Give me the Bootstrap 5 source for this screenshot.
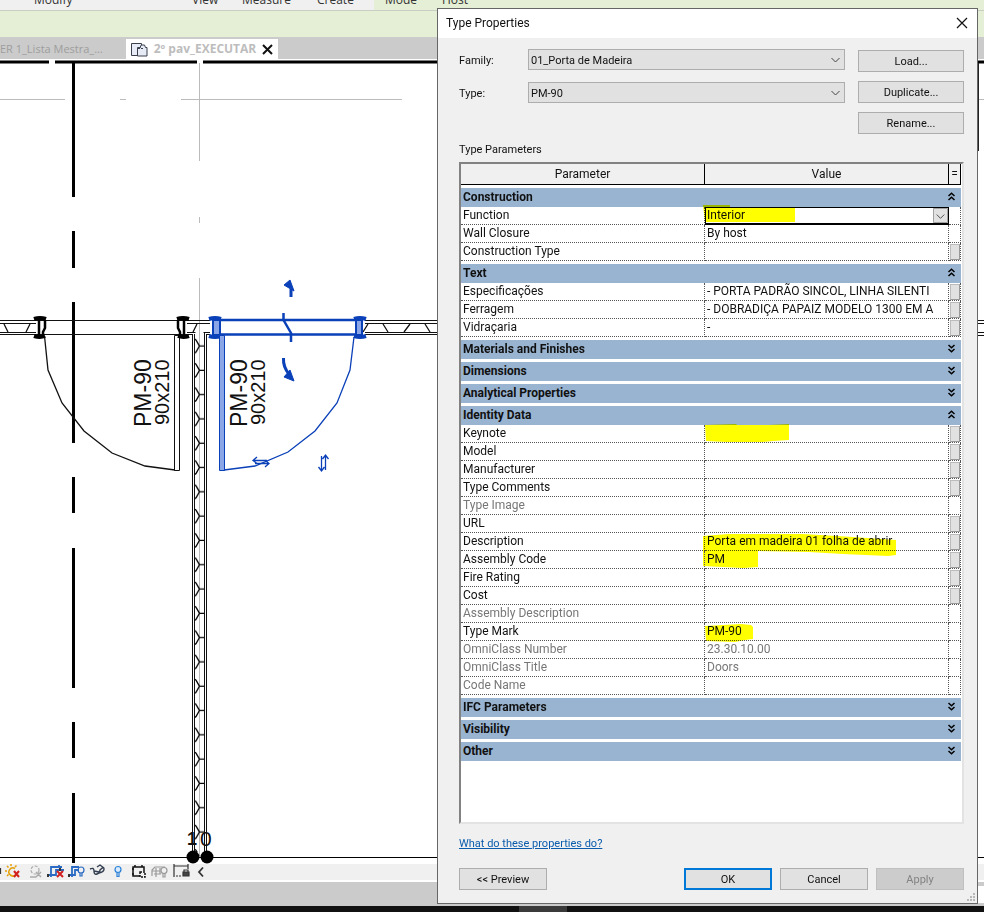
<!DOCTYPE html>
<html lang="en">
<head>
<meta charset="utf-8">
<meta name="viewport" content="width=device-width, initial-scale=1">
<title>Type Properties</title>
<link href="https://cdn.jsdelivr.net/npm/bootstrap@5.3.0/dist/css/bootstrap.min.css" rel="stylesheet">
<style>
  body { font-family: "Open Sans", "Noto Sans", sans-serif; font-size: 12px; line-height: 16px; color: #111; background: #fff; }
  .workspace { min-height: 912px; }
  /* application frame */
  .ribbon-titles { height: 11px; background: linear-gradient(90deg, #f0f0f0 38%, #e4efd6 38%); border-bottom: 1px solid #c9cdc4; display: grid; grid-template: 10px / 158px 50px 75px 68px 57px auto; padding-left: 34px; align-items: end; color: #333; }
  .ribbon-titles span { line-height: 16px; margin-bottom: 2px; }
  .ribbon-panel { height: 26px; background: #e4efd6; }
  .view-tabs { height: 22px; background: #cbcbcb; color: #9d9d9d; }
  .view-tab { width: 126px; font-size: 11px; line-height: 20px; }
  .view-tab-active { width: 152px; height: 20px; background: #fff; color: #bdbdbd; padding: 0 5px; }
  .plan { flex: 1 1 799px; min-height: 0; background: #fff; overflow: visible; }
  .view-controls { height: 24px; background: #f0f0f0; border-top: 6px solid #fff; border-bottom: 2px solid #fff; }
  .view-controls svg { overflow: visible; }
  .frame-strip { height: 24px; background: #cbcbcb; }
  .frame-strip span { width: 7px; height: 17px; background: #fff; }
  .taskbar { height: 6px; background: #111; padding-left: 519px; }
  .taskbar span { width: 48px; background: #3a3a3a; }
  /* dialog window */
  .dialog { top: 8px; left: 437px; right: 6px; background: #f0f0f0; border: 1px solid #666; font-family: Roboto, "Open Sans", sans-serif; }
  .dialog-title { height: 29px; background: #fff; padding: 0 9px 2px 8px; }
  .dialog-title button { width: 12px; height: 12px; }
  .dialog-body { padding: 11px 13px 13px 21px; font-size: 11px; }
  .family-grid { display: grid; grid-template-columns: 69px 1fr; row-gap: 12px; }
  .family-grid label { line-height: 19px; align-self: end; }
  .family-grid .form-select { height: 21px; min-height: 0; padding: 2px 24px 0 2px; font-size: 11px; line-height: 17px; color: #111; background-color: #e1e1e1; border: 1px solid #adadad; border-radius: 0; background-position: right 4px center; background-size: 9px 6px; --bs-form-select-bg-img: url("data:image/svg+xml,%3csvg xmlns='http://www.w3.org/2000/svg' viewBox='0 0 9 6'%3e%3cpath fill='none' stroke='%23444' d='M.5 1l4 4 4-4'/%3e%3c/svg%3e"); background-image: var(--bs-form-select-bg-img); }
  .family-row { gap: 13px; }
  .win-actions { width: 106px; gap: 9px; padding-top: 1px; }
  .win-btn { height: 22px; min-width: 88px; padding: 2px 0 0; font-size: 11px; line-height: 16px; color: #111; background: #e1e1e1; border: 1px solid #adadad; border-radius: 0; }
  .win-btn-default { border: 2px solid #0078d7; }
  .win-btn:disabled { background: #ccc; border-color: #bfbfbf; color: #838383; opacity: 1; }
  .params-box { background: #fff; border: 2px solid #e3e3e3; border-top-color: #828282; border-left-color: #828282; padding: 0 1px 61px 0; }
  .params { width: 100%; table-layout: fixed; border-collapse: separate; border-spacing: 0; font-size: 12px; line-height: 15px; }
  .params col:last-child { width: 12px; }
  .params thead th { height: 21px; padding: 0; font-weight: 400; text-align: center; background: #f0f0f0; border-bottom: 1px solid #000; border-right: 1px solid #000; }
  .params tbody td, .params tbody th { height: 18px; padding: 0 0 0 2px; font-weight: 400; text-align: left; vertical-align: middle; white-space: nowrap; border-bottom: 1px dotted #555; border-right: 1px dotted #555; position: relative; }
  .params tbody td:last-child { padding: 0; }
  .params tbody .section-title { height: 22px; padding: 0 5px 0 2px; font-weight: 700; background: #99b4d1; border: 0; border-top: 3px solid #fff; }
  .section-title button { width: 9px; height: 9px; margin-bottom: 2px; }
  .params .dim > th, .params .dim > td { color: #777; }
  .browse { display: block; width: 10px; height: 16px; margin-left: 1px; padding: 0; background: #e1e1e1; border: 1px solid #bbb; border-right-color: #999; border-bottom-color: #999; }
  .params tbody .edit-cell { padding: 0; border-bottom: 0; border-right: 0; }
  .function-select { display: block; width: 100%; height: 18px; padding: 0 18px 1px 1px; font-size: 12px; line-height: 14px; border: 1px solid #000; border-bottom-width: 2px; border-radius: 0; appearance: none; color: #111; background: #fff url("data:image/svg+xml,%3csvg xmlns='http://www.w3.org/2000/svg' viewBox='0 0 16 16'%3e%3cpath fill='%23e1e1e1' stroke='%23999' d='M.5.5h15v15H.5z'/%3e%3cpath fill='none' stroke='%23444' d='M4 7l4 4 4-4'/%3e%3c/svg%3e") right center / 15px 15px no-repeat; }
  /* marker-pen strokes over the values */
  .marker { position: absolute; left: -2px; top: -3px; mix-blend-mode: multiply; pointer-events: none; overflow: visible; fill: #ff0; }
  .help-line { margin-top: 12px; }
  .help-link { color: #0b5cad; }
  .footer-actions { margin-top: 16px; }
  .grip { position: absolute; right: 1px; bottom: 1px; fill: #b8b8b8; }
</style>
<script src="https://cdn.jsdelivr.net/npm/bootstrap@5.3.0/dist/js/bootstrap.bundle.min.js"></script>
</head>
<body>
<svg class="d-none">
  <symbol id="fold" viewBox="0 0 9 9"><path d="M1.500 4L4.500 1.200L7.500 4M1.500 8L4.500 5.200L7.500 8" fill="none" stroke="#000" stroke-width="1.500"/></symbol>
  <symbol id="unfold" viewBox="0 0 9 9"><path d="M1.500 1L4.500 3.800L7.500 1M1.500 5L4.500 7.800L7.500 5" fill="none" stroke="#000" stroke-width="1.500"/></symbol>
</svg>
<div class="workspace position-relative d-flex flex-column overflow-hidden">
  <div class="ribbon-titles"><span>Modify</span><span>View</span><span>Measure</span><span>Create</span><span>Mode</span><span>Host</span></div>
  <div class="ribbon-panel"></div>
  <div class="view-tabs d-flex align-items-end">
    <div class="view-tab text-nowrap">ER 1_Lista Mestra_...</div>
    <div class="view-tab-active d-flex align-items-center justify-content-between fw-bold text-nowrap">
      <svg width="17" height="15" viewBox="0 0 17 15" fill="#e6ebf5" stroke="#3a3f4c"><path d="M.5 1.500h10v12H.5z"/><path d="M6.500 5.500h3v-1.500l1-1h3l1 2.500h1.500v8.500h-9.500z"/><path d="M6.500 6v7.500M7 6.500h6" stroke-dasharray="2 1"/></svg>
      <span>2º pav_EXECUTAR</span>
      <button class="btn p-0 border-0 d-flex" aria-label="Close view"><svg width="11" height="11" viewBox="0 0 11 11"><path d="M1 1l9 9M10 1l-9 9" stroke="#111" stroke-width="2"/></svg></button>
    </div>
  </div>
  <svg class="plan d-block w-100 position-relative z-1" viewBox="0 59 984 799" preserveAspectRatio="xMinYMin slice" font-family="Liberation Sans, Arial, sans-serif">
    <defs>
      <g id="jamb"><path d="M34 319q6-2 12 0M34 336q6 2 11 0" fill="none" stroke-width="4"/><path d="M39 319v17M45 320v8l-2 4v4" fill="none" stroke-width="2.500"/></g>
      <pattern id="batt" x="192" y="334" width="15" height="24.300" patternUnits="userSpaceOnUse"><path d="M3 5L4 6L7.500 12L4 18L3 19M8 12h4" fill="none" stroke="#000" stroke-width="1.300"/></pattern>
    </defs>
    <path d="M0 62h49M55 62h142M203 62h234M978 62h6" stroke="#000" stroke-width="3"/>
    <path d="M0 99.500h65M120 99.500h6M181 99.500h221M978 99.500h6M199.500 63v98M199.500 217v6M199.500 278v578" stroke="#bbb"/>
    <path d="M978 63v88" stroke="#222" stroke-width="2"/>
    <path d="M73.500 63V197M73.500 231V268M73.500 302V443M73.500 477V513M73.500 548V688M73.500 722V758M73.500 793V863" stroke="#000" stroke-width="3"/>
    <g fill="none" stroke="#111">
      <path d="M0 320.500H210M0 323.500H36M187 323.500H210M0 332.500H36M187 332.500H195.500M203.500 332.500H210M0 334.500H192.500M206.500 334.500H210M365 320.500H437M365 323.500H437M365 332.500H437M365 334.500H437M978 320.500h6M978 323.500h6M978 332.500h6M978 335.500h6"/>
      <path d="M4 324l4 8M26 332l4-8M193 332l4-8M363 332l5-8M383 324l5 8M404 332l6-8M425 324l5 8" stroke-width="1.300"/>
      <path d="M192.500 334V857M194.500 334V857M204.500 332V857M206.500 334V857"/>
      <path d="M44.500 336L48 370L62 403L84 431L112 453L145 466L175 470" stroke-width="1.300"/>
      <path d="M174.500 335.500H179.500V470.500H174.500Z"/>
    </g>
    <path d="M192 334h15v518h-15z" fill="url(#batt)"/>
    <use href="#jamb" stroke="#000"/>
    <use href="#jamb" stroke="#000" transform="translate(223 0) scale(-1 1)"/>
    <g stroke="#0a40b8" fill="none">
      <path d="M220 320H355M220 334.500H355" stroke-width="2.500"/>
      <path d="M213 320h7v15h-7zM356 320h6v15h-6z" fill="#8ba6e6" stroke-width="2"/>
      <path d="M209 319q6-2 12 0M209 336q6 2 12 0M354 319q6-2 12 0M354 336q6 2 12 0" stroke-width="4"/>
      <path d="M219.500 335.500H224.500V470.500H219.500Z" fill="#8ba6e6"/>
      <path d="M224 470L255 466L288 452L315 431L337 403L350 370L354 337" stroke-width="1.300"/>
      <path d="M283.500 313V320L291 333V342" stroke-width="2.500"/>
      <path d="M291 297V289M283.500 358Q283 367 289 374" stroke-width="3"/>
      <path d="M284 285L290 280L294 291ZM284 377L290 370L294 381Z" fill="#0a40b8" stroke-width="1"/>
      <path d="M253 460.500H267M257 457l-4 3.500l4 3M255 463.500H269M265 460l4 3.500l-4 3.500M321.500 456V470M318.500 467l3 4l3-4M325.500 470V456M322.500 459l3-4l3 4" stroke-width="1.300"/>
    </g>
    <g fill="#111">
      <text transform="translate(151 427) rotate(-90)" font-size="23">PM-90</text>
      <text transform="translate(169 425) rotate(-90)" font-size="20">90x210</text>
      <text transform="translate(247 427) rotate(-90)" font-size="23">PM-90</text>
      <text transform="translate(265 425) rotate(-90)" font-size="20">90x210</text>
      <text x="187" y="845" font-size="18" font-weight="700">1</text>
      <text x="200" y="846" font-size="21">0</text>
    </g>
    <path d="M0 857.500H984" stroke="#000"/>
    <circle cx="193" cy="857" r="6.500"/><circle cx="207" cy="857" r="6.500"/>
  </svg>
  <div class="view-controls d-flex align-items-center">
    <svg width="210" height="16" viewBox="0 0 210 16" fill="none" stroke-width="1.200">
      <path d="M.5 4v6" stroke="#333"/>
      <g stroke="#e3a008" stroke-width="1.500"><path d="M16 10.500a4 4 0 1 1-1-6M11 0v2M5 7h2M7 2l1.500 1.500M7 12l1.500-1.500M15 3l1.500-1.500"/></g>
      <path d="M14 7l5 6M19 7l-5 6" stroke="#d21f1f" stroke-width="2"/>
      <g stroke="#aaa"><circle cx="35" cy="6" r="4" stroke-dasharray="3 1.500"/><path d="M30 13h6M36 8l5 5M41 8l-5 5" stroke-width="1.500"/></g>
      <g stroke="#2a6ac4" stroke-width="1.800"><path d="M51 13V3h11M48 11h8V6h8M59 1v3"/><path d="M72 13V3h7M69 11h6V6h4"/></g>
      <path d="M48 10v3M69 10v3M60 4v3" stroke="#333" stroke-width="2"/>
      <path d="M57 7l6 6M63 7l-6 6" stroke="#d21f1f" stroke-width="2"/>
      <circle cx="81" cy="6" r="3" stroke="#2a6ac4"/><path d="M80 9v3h2v-3" stroke="#2a6ac4"/>
      <path d="M90 5q4-2 4 2q0 4 3 3t3-4q4-4 4-1q0 3-5 4M94 7l5 1M97 3l3-2l4 3" stroke="#333f50" stroke-width="1.400"/>
      <circle cx="118" cy="5.500" r="3" stroke="#2a80d8" fill="#d9ecff"/><path d="M117 8.500v4h2v-4" stroke="#2a80d8"/>
      <g stroke="#111" stroke-width="1.500"><path d="M140 12h-7V3h11v4M135 3v-2M142 3v-2M132 5h2M132 10h2"/><path d="M140 8h5v5h-5z" stroke-dasharray="2 1"/></g>
      <g stroke="#999"><path d="M152 12V6l3-3h10M152 7h8M156 4v9M160 4v6M154 10h7"/><circle cx="164" cy="6.500" r="3"/><path d="M163 9v4h2v-4"/></g>
      <g stroke="#333"><path d="M174 0v13M188 0v5M174 2h14"/><path d="M176 12h6" stroke-dasharray="2 1"/><path d="M183 8h6v4h-6z" fill="#444"/><path d="M184 8V6h4v2"/></g>
      <path d="M203 3.500L199 8L203 12.500" stroke="#333" stroke-width="1.800"/>
    </svg>
  </div>
  <div class="frame-strip d-flex justify-content-end align-items-center"><span></span></div>
  <div class="taskbar d-flex"><span></span></div>

  <section class="dialog position-absolute z-2" role="dialog" aria-labelledby="dlg-title">
    <header class="dialog-title d-flex align-items-center justify-content-between">
      <span id="dlg-title">Type Properties</span>
      <button class="btn p-0 border-0 d-flex" aria-label="Close"><svg width="12" height="12" viewBox="0 0 12 12"><path d="M1 1l10 10M11 1L1 11" stroke="#111" stroke-width="1.200"/></svg></button>
    </header>
    <div class="dialog-body">
      <div class="family-row d-flex">
        <div class="family-grid flex-grow-1 align-content-start">
          <label for="family">Family:</label><select id="family" class="form-select"><option>01_Porta de Madeira</option></select>
          <label for="type">Type:</label><select id="type" class="form-select"><option>PM-90</option></select>
        </div>
        <div class="win-actions d-flex flex-column">
          <button class="btn win-btn">Load...</button>
          <button class="btn win-btn">Duplicate...</button>
          <button class="btn win-btn">Rename...</button>
        </div>
      </div>
      <div class="pt-2 pb-1" id="params-label">Type Parameters</div>
      <div class="params-box">
        <table class="params" aria-labelledby="params-label">
          <colgroup><col><col><col></colgroup>
          <thead><tr><th scope="col">Parameter</th><th scope="col">Value</th><th scope="col">=</th></tr></thead>
          <tbody>
            <tr><th colspan="3" class="section-title"><div class="d-flex align-items-center justify-content-between">Construction<button class="btn p-0 border-0 d-flex" aria-label="Collapse"><svg width="9" height="9"><use href="#fold"/></svg></button></div></th></tr>
            <tr><th scope="row"><label for="function">Function</label></th><td class="edit-cell"><select id="function" class="function-select"><option>Interior</option></select><svg class="marker" width="92" height="19"><path d="M0 1L27 1V3H92V18H2Z"/></svg></td><td></td></tr>
            <tr><th scope="row">Wall Closure</th><td>By host</td><td></td></tr>
            <tr><th scope="row">Construction Type</th><td></td><td><button class="browse" aria-label="Browse"></button></td></tr>
            <tr><th colspan="3" class="section-title"><div class="d-flex align-items-center justify-content-between">Text<button class="btn p-0 border-0 d-flex" aria-label="Collapse"><svg width="9" height="9"><use href="#fold"/></svg></button></div></th></tr>
            <tr><th scope="row">Especificações</th><td>- PORTA PADRÃO SINCOL, LINHA SILENTI</td><td><button class="browse" aria-label="Browse"></button></td></tr>
            <tr><th scope="row">Ferragem</th><td>- DOBRADIÇA PAPAIZ MODELO 1300 EM A</td><td><button class="browse" aria-label="Browse"></button></td></tr>
            <tr><th scope="row">Vidraçaria</th><td>-</td><td><button class="browse" aria-label="Browse"></button></td></tr>
            <tr><th colspan="3" class="section-title"><div class="d-flex align-items-center justify-content-between">Materials and Finishes<button class="btn p-0 border-0 d-flex" aria-label="Expand"><svg width="9" height="9"><use href="#unfold"/></svg></button></div></th></tr>
            <tr><th colspan="3" class="section-title"><div class="d-flex align-items-center justify-content-between">Dimensions<button class="btn p-0 border-0 d-flex" aria-label="Expand"><svg width="9" height="9"><use href="#unfold"/></svg></button></div></th></tr>
            <tr><th colspan="3" class="section-title"><div class="d-flex align-items-center justify-content-between">Analytical Properties<button class="btn p-0 border-0 d-flex" aria-label="Expand"><svg width="9" height="9"><use href="#unfold"/></svg></button></div></th></tr>
            <tr><th colspan="3" class="section-title"><div class="d-flex align-items-center justify-content-between">Identity Data<button class="btn p-0 border-0 d-flex" aria-label="Collapse"><svg width="9" height="9"><use href="#fold"/></svg></button></div></th></tr>
            <tr><th scope="row">Keynote</th><td><svg class="marker" width="86" height="20"><path d="M2 3L33 2L34 3H66L86 2V18L70 19L60 20H22L3 19Z"/></svg></td><td><button class="browse" aria-label="Browse"></button></td></tr>
            <tr><th scope="row">Model</th><td></td><td><button class="browse" aria-label="Browse"></button></td></tr>
            <tr><th scope="row">Manufacturer</th><td></td><td><button class="browse" aria-label="Browse"></button></td></tr>
            <tr><th scope="row">Type Comments</th><td></td><td><button class="browse" aria-label="Browse"></button></td></tr>
            <tr class="dim"><th scope="row">Type Image</th><td></td><td></td></tr>
            <tr><th scope="row">URL</th><td></td><td><button class="browse" aria-label="Browse"></button></td></tr>
            <tr><th scope="row">Description</th><td>Porta em madeira 01 folha de abrir<svg class="marker" width="193" height="38"><path d="M0 6L25 4H100L150 7L193 10V25L185 26L140 24L106 22L55 21V37L40 38L0 36V22Z"/></svg></td><td><button class="browse" aria-label="Browse"></button></td></tr>
            <tr><th scope="row">Assembly Code</th><td>PM</td><td><button class="browse" aria-label="Browse"></button></td></tr>
            <tr><th scope="row">Fire Rating</th><td></td><td><button class="browse" aria-label="Browse"></button></td></tr>
            <tr><th scope="row">Cost</th><td></td><td><button class="browse" aria-label="Browse"></button></td></tr>
            <tr class="dim"><th scope="row">Assembly Description</th><td></td><td></td></tr>
            <tr><th scope="row">Type Mark</th><td>PM-90<svg class="marker" width="50" height="22"><path d="M2 6L38 4L48 5L50 7V19L42 20L32 22L3 21Z"/></svg></td><td></td></tr>
            <tr class="dim"><th scope="row">OmniClass Number</th><td>23.30.10.00</td><td></td></tr>
            <tr class="dim"><th scope="row">OmniClass Title</th><td>Doors</td><td></td></tr>
            <tr class="dim"><th scope="row">Code Name</th><td></td><td></td></tr>
            <tr><th colspan="3" class="section-title"><div class="d-flex align-items-center justify-content-between">IFC Parameters<button class="btn p-0 border-0 d-flex" aria-label="Expand"><svg width="9" height="9"><use href="#unfold"/></svg></button></div></th></tr>
            <tr><th colspan="3" class="section-title"><div class="d-flex align-items-center justify-content-between">Visibility<button class="btn p-0 border-0 d-flex" aria-label="Expand"><svg width="9" height="9"><use href="#unfold"/></svg></button></div></th></tr>
            <tr><th colspan="3" class="section-title"><div class="d-flex align-items-center justify-content-between">Other<button class="btn p-0 border-0 d-flex" aria-label="Expand"><svg width="9" height="9"><use href="#unfold"/></svg></button></div></th></tr>
          </tbody>
        </table>
      </div>
      <div class="help-line"><a href="#" class="help-link">What do these properties do?</a></div>
      <div class="footer-actions d-flex gap-2">
        <button class="btn win-btn me-auto">&lt;&lt; Preview</button>
        <button class="btn win-btn win-btn-default">OK</button>
        <button class="btn win-btn">Cancel</button>
        <button class="btn win-btn" disabled>Apply</button>
      </div>
    </div>
    <svg class="grip" width="9" height="9"><path d="M6 0h2v2H6zM3 3h2v2H3zM6 3h2v2H6zM0 6h2v2H0zM3 6h2v2H3zM6 6h2v2H6z"/></svg>
  </section>
</div>
</body>
</html>
